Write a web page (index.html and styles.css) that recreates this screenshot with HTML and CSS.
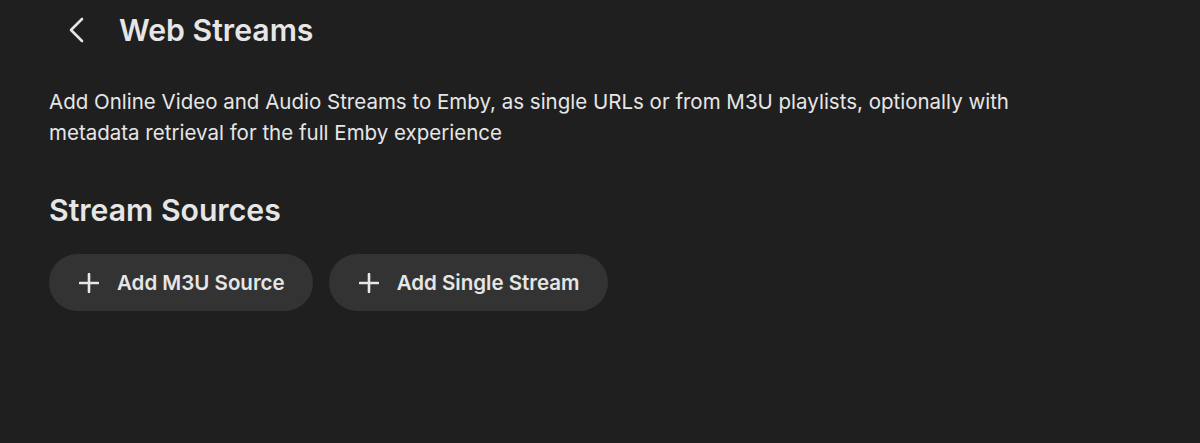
FILE: index.html
```html
<!DOCTYPE html>
<html>
<head>
<meta charset="utf-8">
<link rel="stylesheet" href="styles.css">
</head>
<body>
<div class="page">
  <header class="header">
    <button class="back" aria-label="Back">
      <svg width="20" height="28" viewBox="0 0 20 28"><path d="M15 3 L4 14 L15 25" fill="none" stroke="#e6e6e6" stroke-width="2.6" stroke-linecap="round" stroke-linejoin="round"/></svg>
    </button>
    <h1 class="title">Web Streams</h1>
  </header>
  <p class="desc">Add Online Video and Audio Streams to Emby, as single URLs or from M3U playlists, optionally with metadata retrieval for the full Emby experience</p>
  <h2 class="section">Stream Sources</h2>
  <div class="actions">
    <button class="btn"><svg class="plus" width="20" height="20" viewBox="0 0 20 20"><path d="M10 1 V19 M1 10 H19" stroke="#e6e6e6" stroke-width="2.6" stroke-linecap="round"/></svg><span>Add M3U Source</span></button>
    <button class="btn"><svg class="plus" width="20" height="20" viewBox="0 0 20 20"><path d="M10 1 V19 M1 10 H19" stroke="#e6e6e6" stroke-width="2.6" stroke-linecap="round"/></svg><span>Add Single Stream</span></button>
  </div>
</div>
</body>
</html>
```

FILE: styles.css
```css
html, body {
  margin: 0;
  padding: 0;
  background: #1f1f1f;
  color: #e6e6e6;
  font-family: Inter, "Noto Sans", sans-serif;
  height: 100%;
}
.page {
  padding: 0 49px;
}
.header {
  display: flex;
  align-items: center;
  height: 60px;
}
.back {
  background: none;
  border: 0;
  padding: 0;
  margin-left: 18px;
  width: 24px;
  height: 30px;
  display: flex;
  align-items: center;
  cursor: pointer;
}
.title {
  margin: 0 0 0 28px;
  font-size: 30.2px;
  font-weight: 600;
}
.desc {
  margin: 26px 0 0;
  max-width: 1000px;
  font-size: 20.5px;
  line-height: 31px;
  font-weight: 400;
}
.section {
  margin: 44px 0 0;
  font-size: 30.2px;
  font-weight: 600;
  line-height: 36px;
}
.actions {
  display: flex;
  gap: 16px;
  margin-top: 26px;
}
.btn {
  display: flex;
  align-items: center;
  gap: 18px;
  height: 57px;
  padding: 0 28px 0 30px;
  background: #333333;
  border: 0;
  border-radius: 29px;
  color: #e6e6e6;
  font-family: inherit;
  font-size: 20.5px;
  font-weight: 600;
}
```
